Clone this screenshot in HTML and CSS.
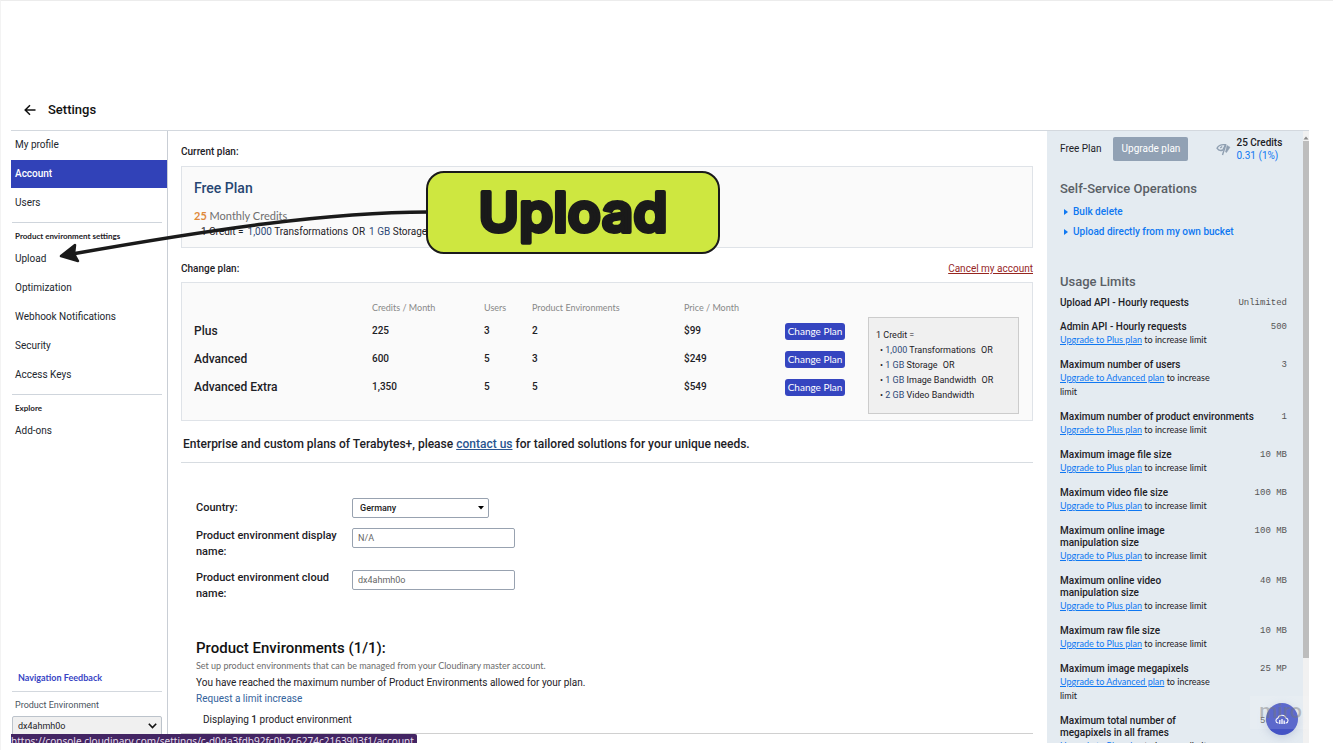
FILE: index.html
```html
<!DOCTYPE html>
<html lang="en">
<head>
<meta charset="utf-8">
<title>Settings</title>
<link rel="stylesheet" href="styles.css">
</head>
<body>
<div class="app">
  <header class="topbar">
    <button class="back" aria-label="Back">
      <svg width="12" height="12" viewBox="0 0 12 12" fill="none" stroke="#111" stroke-width="1.5"><path d="M11.5 6H1.5M6 1.2L1.2 6L6 10.8"/></svg>
    </button>
    <h1>Settings</h1>
  </header>
  <div class="columns">
    <nav class="sidebar">
      <div class="group">
        <a href="#">My profile</a>
        <a href="#" class="active">Account</a>
        <a href="#">Users</a>
      </div>
      <div class="group ruled">
        <h2>Product environment settings</h2>
        <a href="#">Upload</a>
        <a href="#">Optimization</a>
        <a href="#">Webhook Notifications</a>
        <a href="#">Security</a>
        <a href="#">Access Keys</a>
      </div>
      <div class="group ruled">
        <h2>Explore</h2>
        <a href="#">Add-ons</a>
      </div>
      <div class="side-foot">
        <a href="#" class="feedback">Navigation Feedback</a>
        <div class="env">
          <label for="env">Product Environment</label>
          <div class="pick">
            <select id="env"><option>dx4ahmh0o</option></select>
            <svg width="9" height="6" viewBox="0 0 9 6" fill="none" stroke="#111" stroke-width="1.6"><path d="M.8 .8L4.5 4.6L8.2 .8"/></svg>
          </div>
        </div>
      </div>
    </nav>

    <main class="content">
      <h2 class="label">Current plan:</h2>
      <section class="card current">
        <h3>Free Plan</h3>
        <p class="monthly"><b>25</b> Monthly Credits</p>
        <p class="equation"><span>1 Credit =</span><span><i>1,000</i> Transformations</span><span>OR</span><span><i>1 GB</i> Storage</span><span>OR</span></p>
      </section>
      <div class="change-head">
        <h2 class="label">Change plan:</h2>
        <a href="#" class="cancel">Cancel my account</a>
      </div>
      <section class="card change">
        <table class="plans">
          <colgroup><col class="c-name"><col class="c-credits"><col class="c-users"><col class="c-env"><col class="c-price"><col class="c-act"></colgroup>
          <thead><tr><th></th><th>Credits / Month</th><th>Users</th><th>Product Environments</th><th>Price / Month</th><th></th></tr></thead>
          <tbody>
            <tr><th scope="row">Plus</th><td>225</td><td>3</td><td>2</td><td>$99</td><td><button class="primary">Change Plan</button></td></tr>
            <tr><th scope="row">Advanced</th><td>600</td><td>5</td><td>3</td><td>$249</td><td><button class="primary">Change Plan</button></td></tr>
            <tr><th scope="row">Advanced Extra</th><td>1,350</td><td>5</td><td>5</td><td>$549</td><td><button class="primary">Change Plan</button></td></tr>
          </tbody>
        </table>
        <div class="credit-box">
          <p>1 Credit =</p>
          <ul>
            <li><i>1,000</i> Transformations <span>OR</span></li>
            <li><i>1 GB</i> Storage <span>OR</span></li>
            <li><i>1 GB</i> Image Bandwidth <span>OR</span></li>
            <li><i>2 GB</i> Video Bandwidth</li>
          </ul>
        </div>
      </section>
      <p class="enterprise">Enterprise and custom plans of Terabytes+, please <a href="#">contact us</a> for tailored solutions for your unique needs.</p>

      <form class="details">
        <label for="country" class="middle">Country:</label>
        <div class="pick country">
          <select id="country"><option>Germany</option></select>
          <svg width="6" height="4" viewBox="0 0 6 4"><path d="M0 0H6L3 3.6Z" fill="#000"/></svg>
        </div>
        <label for="display">Product environment display name:</label>
        <input id="display" type="text" value="N/A">
        <label for="cloud">Product environment cloud name:</label>
        <input id="cloud" type="text" value="dx4ahmh0o">
      </form>

      <section class="envs">
        <h2>Product Environments (1/1):</h2>
        <p class="hint">Set up product environments that can be managed from your Cloudinary master account.</p>
        <p>You have reached the maximum number of Product Environments allowed for your plan.</p>
        <a href="#">Request a limit increase</a>
        <p class="count">Displaying <b>1</b> product environment</p>
      </section>
    </main>

    <aside class="usage">
      <div class="plan-row">
        <span>Free Plan</span>
        <button class="upgrade">Upgrade plan</button>
        <svg class="gauge" width="15" height="13" viewBox="0 0 15 13" fill="none" stroke="#8f9fb1" stroke-width="1.4"><path d="M1 5.200C2.500 2.300 5.500 1.200 9.500 1.700L6.800 7C4.500 8 2.300 7.300 1 5.200Z"/><path d="M4.200 5L6.200 3.500M9.800 1.800L6.500 12"/><path d="M11 2.500L14 4.200L10.500 9.500L9.500 9Z" fill="#8f9fb1" stroke-width=".5"/></svg>
        <div class="credits"><b>25 Credits</b><a href="#">0.31 (1%)</a></div>
      </div>
      <h2>Self-Service Operations</h2>
      <ul class="ops">
        <li><a href="#">Bulk delete</a></li>
        <li><a href="#">Upload directly from my own bucket</a></li>
      </ul>
      <h2>Usage Limits</h2>
      <ul class="limits">
        <li><div><b>Upload API - Hourly requests</b></div><code>Unlimited</code></li>
        <li><div><b>Admin API - Hourly requests</b><p><a href="#">Upgrade to Plus plan</a> to increase limit</p></div><code>500</code></li>
        <li><div><b>Maximum number of users</b><p><a href="#">Upgrade to Advanced plan</a> to increase limit</p></div><code>3</code></li>
        <li><div class="long"><b>Maximum number of product environments</b><p><a href="#">Upgrade to Plus plan</a> to increase limit</p></div><code>1</code></li>
        <li><div><b>Maximum image file size</b><p><a href="#">Upgrade to Plus plan</a> to increase limit</p></div><code>10 MB</code></li>
        <li><div><b>Maximum video file size</b><p><a href="#">Upgrade to Plus plan</a> to increase limit</p></div><code>100 MB</code></li>
        <li><div><b>Maximum online image<br>manipulation size</b><p><a href="#">Upgrade to Plus plan</a> to increase limit</p></div><code>100 MB</code></li>
        <li><div><b>Maximum online video<br>manipulation size</b><p><a href="#">Upgrade to Plus plan</a> to increase limit</p></div><code>40 MB</code></li>
        <li><div><b>Maximum raw file size</b><p><a href="#">Upgrade to Plus plan</a> to increase limit</p></div><code>10 MB</code></li>
        <li><div><b>Maximum image megapixels</b><p><a href="#">Upgrade to Advanced plan</a> to increase limit</p></div><code>25 MP</code></li>
        <li><div><b>Maximum total number of<br>megapixels in all frames</b><p><a href="#">Upgrade to Plus plan</a> to increase limit</p></div><code>50 MP</code></li>
      </ul>
    </aside>
    <div class="scroll"><svg width="6" height="6" viewBox="0 0 6 6"><path d="M0.500 4.500L3 1.500L5.500 4.500Z" fill="#888"/></svg><div class="thumb"></div></div>
  </div>
  <div class="status">https://console.cloudinary.com/settings/c-d0da3fdb92fc0b2c6274c2163903f1/account</div>
  <button class="help" aria-label="Help">
    <svg width="14" height="11" viewBox="0 0 16 12" fill="none" stroke="#fff" stroke-width="1.2"><path d="M4 10H3.500A2.800 2.800 0 0 1 3.200 4.500A5 5 0 0 1 12.600 4.300A2.900 2.900 0 0 1 12.500 10H12"/><path d="M5.500 6.500V11M8 5.500V11M10.500 7V11" stroke-width="1.500"/></svg>
  </button>
  <div class="mark">miro</div>
</div>

<svg class="arrow" width="372" height="60" viewBox="0 0 372 60"><path d="M370 6C270 6 150 24 14 48" fill="none" stroke="#1a1a1a" stroke-width="3.600"/><path d="M3 50L17 39L16 48L20 55Z" fill="#1a1a1a" stroke="#1a1a1a" stroke-width="2.500" stroke-linejoin="round"/></svg>
<div class="callout"><svg width="220" height="72" viewBox="0 0 220 72"><text x="110" y="55" text-anchor="middle">Upload</text></svg></div>
</body>
</html>
```
FILE: styles.css
```css
* { box-sizing: border-box; }
body {
  margin: 0;
  height: 100vh;
  padding: 89px 24px 7px 10px;
  border-top: 1px solid #ececec;
  border-left: 1px solid #f3f3f3;
  overflow: hidden;
  position: relative;
  background: #fff;
  color: #1d2126;
  font: 10px/14px Roboto, "Noto Sans", sans-serif;
}
h1, h2, h3, p, ul { margin: 0; padding: 0; }
ul { list-style: none; }
i { font-style: normal; color: #2f4a78; }
b { font-weight: 500; }
button, input, select { font: inherit; color: inherit; }
button { border: 0; padding: 0; }
a { text-decoration: none; }

.app { position: relative; height: 100%; display: flex; flex-direction: column; overflow: hidden; }
.topbar { flex: none; height: 41px; padding: 0 13px; display: flex; align-items: center; gap: 12px; border-bottom: 1px solid #d3d8de; }
.back { background: none; display: flex; }
h1 { font-size: 13px; line-height: 16px; font-weight: 500; color: #111; }
.columns { flex: 1; min-height: 0; display: flex; }

.sidebar { flex: none; width: 157px; border-right: 1px solid #c9ced5; display: flex; flex-direction: column; }
.group { display: flex; flex-direction: column; gap: 1px; }
.group a { height: 28px; padding: 0 4px; display: flex; align-items: center; color: #22272e; }
.group a.active { background: #3142b8; color: #fff; font-weight: 500; }
.ruled { margin: 5px 5px 0 1px; border-top: 1px solid #cfd5dc; padding-top: 5px; }
.ruled a { padding: 0 3px; }
.ruled h2 { font: 700 8px/16px Lato, sans-serif; padding: 0 3px; }
.side-foot { margin-top: auto; padding: 0 5px 7px 1px; }
.feedback { display: block; padding: 0 6px 6px; font: 700 9px/14px Lato, sans-serif; color: #3744c4; border-bottom: 1px solid #d3d8de; }
.env label { display: block; padding: 6px 3px 4px; font: 9px/14px Roboto, sans-serif; color: #4a5460; }
.pick { position: relative; display: flex; align-items: center; }
.pick select { appearance: none; width: 100%; background: none; outline: 0; }
.pick svg { position: absolute; right: 5px; pointer-events: none; }
.env select { height: 20px; padding: 0 5px; border: 1px solid #bcc3cb; border-radius: 2px; background: #f0f0f0; font-size: 9px; }

.content { flex: 1; min-width: 0; padding: 14px 14px 0 13px; overflow: hidden; }
.label { font-size: 10px; line-height: 14px; font-weight: 500; }
.card { border: 1px solid #dfe3e8; background: #fafafa; }
.current { height: 82px; margin-top: 7px; padding: 12px; }
.current h3 { font-size: 14px; line-height: 18px; font-weight: 500; color: #274672; }
.monthly { margin-top: 11px; font: 11px/16px Lato, sans-serif; color: #6e6e6e; }
.monthly b { color: #e0893a; font-weight: 700; }
.equation { display: flex; gap: 4px; padding-left: 7px; line-height: 16px; }
.change-head { display: flex; justify-content: space-between; margin: 14px 0 6px; }
.cancel { color: #96261f; text-decoration: underline; }
.change { display: flex; justify-content: space-between; align-items: flex-start; padding: 15px 13px 6px 12px; }
.plans { table-layout: fixed; width: 651px; border-collapse: collapse; }
.plans th, .plans td { padding: 0; text-align: left; height: 28px; font-weight: 500; }
.plans thead th { height: 19px; padding-top: 1px; font: 9px/14px Lato, sans-serif; color: #888; }
.plans tbody th { font-size: 12px; }
.c-name { width: 178px; }
.c-credits { width: 112px; }
.c-users { width: 48px; }
.c-env { width: 152px; }
.c-price { width: 101px; }
.c-act { width: 60px; }
.plans .primary { display: block; width: 60px; height: 17px; border-radius: 3px; background: #3545c0; color: #fff; font: 10px/17px Lato, sans-serif; }
.credit-box { flex: none; width: 151px; margin-top: 19px; padding: 10px 7px; border: 1px solid #ccc; background: #f0f0f0; font-size: 9px; line-height: 15px; }
.credit-box li { padding-left: 4px; }
.credit-box li::before { content: "• "; }
.credit-box span { margin-left: 3px; }
.enterprise { padding: 15px 2px 10px; border-bottom: 1px solid #d7dce1; font-size: 12px; line-height: 16px; font-weight: 500; }
.enterprise a { color: #2a5590; text-decoration: underline; }

.details { display: grid; grid-template-columns: 150px 163px; column-gap: 6px; row-gap: 10px; align-items: start; padding: 35px 15px 0; }
.details label { font-size: 11px; line-height: 16px; font-weight: 500; }
.details .middle { align-self: center; }
.details input, .details select { height: 20px; padding: 0 5px; border: 1px solid #98a2b0; border-radius: 2px; background: #fff; font-size: 9px; color: #666; }
.details input { width: 100%; }
.details .country { width: 137px; }
.details .country select { padding: 0 7px; color: #222; font-weight: 500; }

.envs { padding: 36px 15px 0; border-bottom: 1px solid #d0d0d0; }
.envs h2 { font-size: 15px; line-height: 20px; font-weight: 500; color: #111; }
.envs p { font-size: 10px; line-height: 18px; }
.envs .hint { font: 9px/16px Lato, sans-serif; color: #6c6c6c; }
.envs a { color: #33629c; }
.envs .count { padding: 5px 7px 4px; }

.usage { flex: none; width: 256px; overflow: hidden; background: #e4ebf1; padding: 5px 16px 0 13px; }
.plan-row { display: flex; align-items: center; }
.upgrade { width: 75px; height: 24px; margin: 0 28px 0 12px; border-radius: 2px; background: #91a1b4; color: #fff; }
.credits { margin-left: 5px; display: flex; flex-direction: column; line-height: 13px; }
.usage a { color: #0f78f2; }
.usage h2 { font-size: 13px; line-height: 18px; font-weight: 500; color: #5a5f66; }
.plan-row + h2 { margin-top: 18px; }
.ops { margin: 4px 0 31px; font-weight: 500; line-height: 20px; }
.ops li::before { content: ""; display: inline-block; margin: 0 5px 0 4px; border: 4px solid transparent; border-width: 3px 0 3px 4px; border-left-color: #0f78f2; }
.limits { padding-top: 6px; display: flex; flex-direction: column; gap: 12px; line-height: 12px; }
.limits li { display: flex; justify-content: space-between; }
.limits div { width: 150px; white-space: nowrap; }
.limits .long { width: 200px; }
.limits p { font: 9px/14px Lato, sans-serif; white-space: normal; }
.limits a { text-decoration: underline; }
.limits code { font: 9px/12px "Liberation Mono", monospace; color: #555; }
.scroll { flex: none; width: 6px; background: #f1f1f1; display: flex; flex-direction: column; padding-top: 4px; }
.thumb { height: 85%; background: #bdbdbd; }

.status { position: absolute; left: 0; bottom: 0; height: 9px; overflow: hidden; padding-right: 3px; border-radius: 0 2px 0 0; background: #432563; color: #e3dcec; font: 10px/14px "Noto Sans", sans-serif; }
.help { position: absolute; right: 11px; bottom: 8px; width: 32px; height: 32px; border-radius: 50%; background: #4453c5; box-shadow: 0 2px 8px #8b9bc066; display: flex; align-items: center; justify-content: center; }
.mark { position: absolute; right: 0; bottom: 14px; padding: 4px 7px 7px 9px; background: #ffffff22; color: #77777770; font-size: 21px; line-height: 22px; font-weight: 500; }
.arrow { position: absolute; left: 57px; top: 205px; }
.callout { position: absolute; left: 425px; top: 170px; width: 294px; height: 83px; border: 2px solid #1a1a1a; border-radius: 18px; background: #cee740; display: flex; align-items: center; justify-content: center; }
.callout text { font: 600 55px Inter, sans-serif; fill: #1a1a1a; stroke: #1a1a1a; stroke-width: 4px; stroke-linejoin: round; }
```
